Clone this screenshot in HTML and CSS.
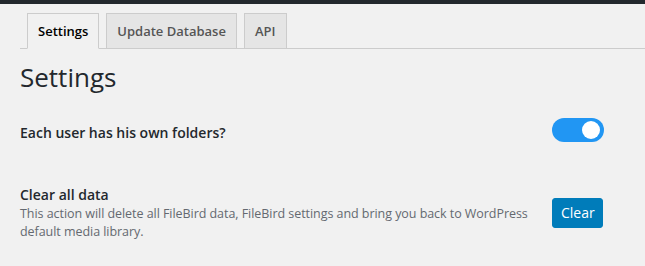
FILE: index.html
```html
<!DOCTYPE html>
<html lang="en">
<head>
<meta charset="utf-8">
<title>FileBird Settings</title>
<link rel="stylesheet" href="styles.css">
</head>
<body>
<div class="adminbar"></div>
<div class="wrap">
  <nav class="tabs">
    <a class="tab active">Settings</a>
    <a class="tab">Update Database</a>
    <a class="tab">API</a>
  </nav>
  <h1 class="title">Settings</h1>
  <div class="row row-folders">
    <div class="label">Each user has his own folders?</div>
    <div class="control">
      <span class="toggle on"><span class="knob"></span></span>
    </div>
  </div>
  <div class="row row-clear">
    <div class="label">
      <div class="label-title">Clear all data</div>
      <p class="desc">This action will delete all FileBird data, FileBird settings and bring you back to WordPress default media library.</p>
    </div>
    <div class="control">
      <button class="btn-primary">Clear</button>
    </div>
  </div>
</div>
</body>
</html>
```

FILE: styles.css
```css
html, body {
  margin: 0;
  padding: 0;
  background: #f1f1f1;
}
body {
  font-family: "Open Sans", "Noto Sans", sans-serif;
  color: #23282d;
  width: 645px;
  height: 266px;
  overflow: hidden;
}
.adminbar {
  height: 4px;
  background: #23282d;
}
.wrap {
  padding: 0 0 0 20px;
}
.tabs {
  display: flex;
  margin-top: 9px;
  border-bottom: 1px solid #ccc;
  height: 35px;
  align-items: flex-end;
}
.tab {
  display: block;
  box-sizing: border-box;
  height: 36px;
  margin-left: 7px;
  margin-bottom: -1px;
  padding: 5px 10px;
  border: 1px solid #ccc;
  background: #e5e5e5;
  color: #555;
  font-size: 13px;
  font-weight: 600;
  line-height: 24px;
  white-space: nowrap;
}
.tab.active {
  background: #f1f1f1;
  border-bottom-color: #f1f1f1;
  color: #000;
}
.title {
  margin: 0;
  padding-top: 12px;
  font-size: 26px;
  font-weight: 500;
  line-height: 32px;
  color: #23282d;
}
.row {
  display: flex;
  align-items: flex-start;
}
.label {
  width: 532px;
  font-size: 14px;
  font-weight: 600;
}
.control {
  flex: none;
}
.row-folders {
  margin-top: 25px;
}
.row-folders .label {
  padding-top: 5px;
  line-height: 20px;
}
.toggle {
  display: flex;
  align-items: center;
  justify-content: flex-end;
  box-sizing: border-box;
  width: 52px;
  height: 24px;
  padding: 0 4px;
  border-radius: 12px;
  background: #2196f3;
}
.knob {
  width: 18px;
  height: 18px;
  border-radius: 50%;
  background: #fff;
}
.row-clear {
  margin-top: 42px;
}
.label-title {
  line-height: 20px;
}
.desc {
  margin: 0;
  font-size: 12.5px;
  font-weight: 400;
  letter-spacing: -0.05px;
  line-height: 18px;
  color: #646970;
}
.row-clear .control {
  padding-top: 13px;
}
.btn-primary {
  display: block;
  box-sizing: border-box;
  width: 51px;
  height: 30px;
  padding: 0 8px;
  border: 1px solid #007cba;
  border-radius: 3px;
  background: #007cba;
  color: #fff;
  font-family: inherit;
  font-size: 14px;
  line-height: 28px;
}
```
